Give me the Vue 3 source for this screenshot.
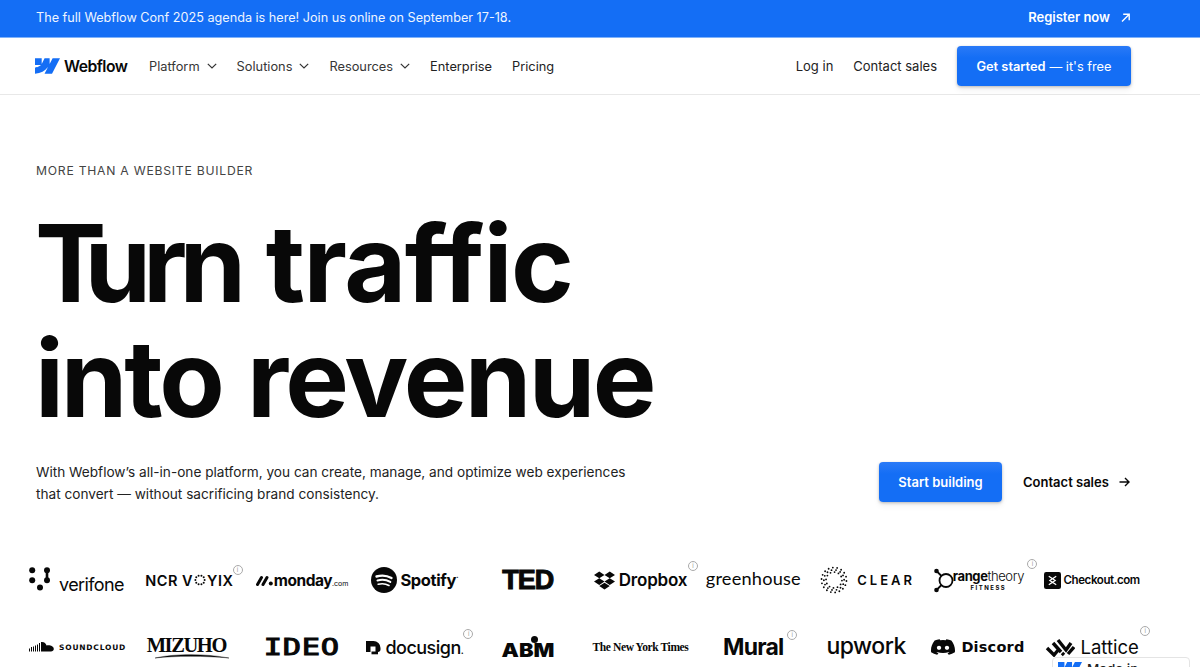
<script setup>
const wf = 'M1080 0L735.4 673.7H411.7L555.9 394.3H549.4C430.5 548.9 253.1 650.6 0 673.7V400.1C0 400.1 161.9 390.5 257.1 290.5H0V0H288.9V237.9H295.4L413.5 0H631.9V236.4H638.4L760.9 0H1080Z'
const navItems = [
  { label: 'Platform', menu: true },
  { label: 'Solutions', menu: true },
  { label: 'Resources', menu: true },
  { label: 'Enterprise', menu: false },
  { label: 'Pricing', menu: false }
]
const clearDots = []
for (const [r, n] of [[7.4, 12], [9.4, 14], [11.6, 18]]) {
  for (let i = 0; i < n; i++) {
    const a = (i / n) * Math.PI * 2 + r
    clearDots.push({ x: 13 + r * Math.cos(a), y: 13 + r * Math.sin(a) })
  }
}
const voyix = []
for (let i = 0; i < 10; i++) {
  const a = (i / 10) * Math.PI * 2
  voyix.push({ x: 6 + 4.6 * Math.cos(a), y: 6 + 4.6 * Math.sin(a) })
}
</script>

<template>
  <div class="page">
    <div class="banner">
      <span class="banner-text">The full Webflow Conf 2025 agenda is here! Join us online on September 17-18.</span>
      <span class="banner-link">Register now
        <svg width="11" height="11" viewBox="0 0 11 11" fill="none" stroke="#fff" stroke-width="1.4"><path d="M2 9.5 9 2.5M3.2 2.2H9.2V8.2"/></svg>
      </span>
    </div>

    <nav class="nav">
      <div class="brand">
        <svg width="25" height="16" viewBox="0 0 1080 674"><path :d="wf" fill="#146ef5"/></svg>
        <span class="brand-name">Webflow</span>
      </div>
      <ul class="nav-list">
        <li v-for="item in navItems" :key="item.label" class="nav-item" :class="{ dark: !item.menu }">
          {{ item.label }}
          <svg v-if="item.menu" width="10" height="6" viewBox="0 0 10 6" fill="none" stroke="#333" stroke-width="1.2"><path d="M.8.8 5 5 9.2.8"/></svg>
        </li>
      </ul>
      <div class="nav-right">
        <span class="nav-item dark">Log in</span>
        <span class="nav-item dark">Contact sales</span>
        <span class="btn btn-nav">Get started <span class="light">— it's free</span></span>
      </div>
    </nav>

    <main class="hero">
      <p class="eyebrow">MORE THAN A WEBSITE BUILDER</p>
      <h1 class="title"><span class="w-turn"><span class="w-t">T</span>urn</span> <span class="w-traffic">traffic</span><br><span class="w-into">into</span> <span class="w-revenue">revenue</span></h1>
      <div class="sub">
        <p class="lead">With Webflow’s all-in-one platform, you can create, manage, and optimize web experiences<br>that convert — without sacrificing brand consistency.</p>
        <div class="cta">
          <span class="btn btn-hero">Start building</span>
          <span class="cta-link">Contact sales
            <svg width="11" height="10" viewBox="0 0 11 10" fill="none" stroke="#080808" stroke-width="1.4"><path d="M.5 5H10M6 1l4 4-4 4"/></svg>
          </span>
        </div>
      </div>
    </main>

    <section class="logos">
      <div class="logo verifone">
        <svg width="22" height="24" viewBox="0 0 22 24" class="vf-mark"><g fill="#080808"><circle cx="3.200" cy="3.200" r="3"/><circle cx="3.200" cy="13.200" r="3"/><circle cx="11" cy="20.500" r="3"/><circle cx="18" cy="3.200" r="3"/><circle cx="18" cy="13.200" r="3"/><rect x="16.700" y="3" width="2.600" height="10"/></g></svg>
        <span>verifone</span>
      </div>
      <div class="logo ncr">
        <span>NCR V</span><svg width="12" height="12" viewBox="0 0 12 12"><circle v-for="(d, i) in voyix" :key="i" :cx="d.x" :cy="d.y" r="1" fill="#080808"/></svg><span>YIX</span>
        <i class="info i-ncr">i</i>
      </div>
      <div class="logo monday">
        <svg width="17" height="11" viewBox="0 0 17 11" fill="#080808"><path d="M1.500 9.500 5.500 2.500M7 9.500l4-7" stroke="#080808" stroke-width="3" stroke-linecap="round"/><circle cx="14.800" cy="8.500" r="2"/></svg>
        <span>monday<small>.com</small></span>
      </div>
      <div class="logo spotify">
        <svg width="26" height="26" viewBox="0 0 26 26"><circle cx="13" cy="13" r="13" fill="#080808"/><g fill="none" stroke="#fff" stroke-linecap="round"><path d="M5.500 9.500c5-1.500 10.500-1 15 1.500" stroke-width="2.400"/><path d="M6.500 13.500c4.500-1.200 9-.7 12.800 1.400" stroke-width="2"/><path d="M7.200 17.300c3.800-1 7.500-.6 10.800 1.200" stroke-width="1.600"/></g></svg>
        <span>Spotify<sup>·</sup></span>
      </div>
      <div class="logo ted"><span>TED</span></div>
      <div class="logo dropbox">
        <svg width="21" height="19" viewBox="0 1.500 24 21" fill="#080808"><path d="M6 1.807L0 5.629l6 3.822 6.001-3.822L6 1.807zM18 1.807l-6 3.822 6 3.822 6-3.822-6-3.822zM0 13.274l6 3.822 6.001-3.822L6 9.452l-6 3.822zM18 9.452l-6 3.822 6 3.822 6-3.822-6-3.822zM6 18.371l6.001 3.822 6-3.822-6-3.822L6 18.371z"/></svg>
        <span>Dropbox</span>
        <i class="info i-dropbox">i</i>
      </div>
      <div class="logo greenhouse"><span>greenhouse</span></div>
      <div class="logo clear">
        <svg width="28" height="28" viewBox="0 0 26 26"><circle v-for="(d, i) in clearDots" :key="i" :cx="d.x" :cy="d.y" r=".85" fill="#080808"/></svg>
        <span>CLEAR</span>
      </div>
      <div class="logo orange">
        <svg width="20" height="25" viewBox="0 0 20 25" class="ot-mark" fill="none" stroke="#080808" stroke-width="1.800"><path d="M2.500 3 7.500 8M2.500 22l5-5"/><circle cx="2.500" cy="3" r="2.300" fill="#080808" stroke="none"/><circle cx="2.500" cy="22" r="2.300" fill="#080808" stroke="none"/><circle cx="12" cy="12.500" r="6.500"/></svg>
        <div class="ot-text"><span class="ot-name"><b>range</b>theory</span><span class="ot-sub">FITNESS</span></div>
        <i class="info i-orange">i</i>
      </div>
      <div class="logo checkout">
        <svg width="17" height="17" viewBox="0 0 16 16"><rect width="16" height="16" rx="2" fill="#080808"/><path d="M11.500 4 5.500 8l6 4M4.500 4l6 4-6 4" fill="none" stroke="#fff" stroke-width="1.200"/></svg>
        <span>Checkout.com</span>
      </div>

      <div class="logo soundcloud">
        <svg width="25" height="12" viewBox="0 0 25 11" fill="#080808"><path d="M0 7h1v3H0zM2 5.500h1V10H2zM4 5h1v5H4zM6 4h1v6H6zM8 3h1v7H8zM10 1.500h1V10h-1zM12 .5C15 0 17 1.800 17.500 4 20 3.200 24.800 4 24.800 7.500 24.800 9 23.500 10 22 10H12z"/></svg>
        <span>SOUNDCLOUD</span>
      </div>
      <div class="logo mizuho">
        <span>MIZUHO</span>
        <svg width="74" height="5" viewBox="0 0 74 5" class="mz-swoosh"><path d="M0 4C20-.5 50-.5 74 4 50 1.800 20 1.800 0 4Z" fill="#080808" stroke="#080808" stroke-width=".4"/></svg>
      </div>
      <div class="logo ideo"><span>IDEO</span></div>
      <div class="logo docusign">
        <svg width="15" height="15" viewBox="0 0 15 15" fill="#080808"><path d="M0 1h7.500a7 7 0 0 1 7 7v1.500c0 1.500-1 2.500-2.500 2.500H9.500V6.500H4.500V12H0z"/><path d="M5.500 11.500H12v2.800H5.500z"/></svg>
        <span>docusign<small>.</small></span>
        <i class="info i-docu">i</i>
      </div>
      <div class="logo abm">
        <span>ABM</span>
        <b class="abm-dot"></b>
      </div>
      <div class="logo nyt"><span>The New York Times</span></div>
      <div class="logo mural">
        <span>Mural</span>
        <i class="info i-mural">i</i>
      </div>
      <div class="logo upwork"><span>upwork</span></div>
      <div class="logo discord">
        <svg width="24" height="18" viewBox="0 1.500 24 21" preserveAspectRatio="none" fill="#080808"><path d="M20.317 4.37a19.791 19.791 0 0 0-4.885-1.515.074.074 0 0 0-.079.037c-.21.375-.444.864-.608 1.25a18.27 18.27 0 0 0-5.487 0 12.64 12.64 0 0 0-.617-1.25.077.077 0 0 0-.079-.037A19.736 19.736 0 0 0 3.677 4.37a.07.07 0 0 0-.032.027C.533 9.046-.32 13.58.099 18.057a.082.082 0 0 0 .031.057 19.9 19.9 0 0 0 5.993 3.03.078.078 0 0 0 .084-.028 14.09 14.09 0 0 0 1.226-1.994.076.076 0 0 0-.041-.106 13.107 13.107 0 0 1-1.872-.892.077.077 0 0 1-.008-.128 10.2 10.2 0 0 0 .372-.292.074.074 0 0 1 .077-.01c3.928 1.793 8.18 1.793 12.062 0a.074.074 0 0 1 .078.01c.12.098.246.198.373.292a.077.077 0 0 1-.006.127 12.299 12.299 0 0 1-1.873.892.077.077 0 0 0-.041.107c.36.698.772 1.362 1.225 1.993a.076.076 0 0 0 .084.028 19.839 19.839 0 0 0 6.002-3.03.077.077 0 0 0 .032-.054c.5-5.177-.838-9.674-3.549-13.66a.061.061 0 0 0-.031-.03zM8.02 15.33c-1.183 0-2.157-1.085-2.157-2.419 0-1.333.956-2.419 2.157-2.419 1.21 0 2.176 1.096 2.157 2.42 0 1.333-.956 2.418-2.157 2.418zm7.975 0c-1.183 0-2.157-1.085-2.157-2.419 0-1.333.955-2.419 2.157-2.419 1.21 0 2.176 1.096 2.157 2.42 0 1.333-.946 2.418-2.157 2.418z"/></svg>
        <span>Discord</span>
      </div>
      <div class="logo lattice">
        <svg width="30" height="19" viewBox="0 0 30 19" fill="none" stroke="#080808" stroke-width="3.400"><path d="M2 10l7 7 5-6M8 5l8 9M13 2l8 10 5-7M19 17l-2-2M23 16l6-7"/></svg>
        <span>Lattice</span>
        <i class="info i-lattice">i</i>
      </div>
    </section>

    <div class="badge">
      <svg width="24" height="15" viewBox="0 0 1080 674"><path :d="wf" fill="#146ef5"/></svg>
      <span>Made in Webflow</span>
    </div>
  </div>
</template>

<style>
html, body { margin: 0; height: 667px; overflow: hidden; background: #fff; }
</style>

<style scoped>
.page {
  position: relative;
  width: 1200px;
  height: 667px;
  overflow: hidden;
  background: #fff;
  color: #080808;
  font-family: Inter, "Noto Sans", sans-serif;
}
svg { flex-shrink: 0; }
.banner {
  border-bottom: 1px solid #7fb2fa;
  background: #146ef5;
  color: #fff;
  display: flex;
  align-items: center;
  justify-content: space-between;
  padding: 0 69px 3px 36px;
  box-sizing: content-box;
  height: 34px;
  font-size: 12.650px;
}
.banner-text { color: #eef5ff; }
.banner-link {
  display: flex;
  align-items: center;
  gap: 10px;
  font-weight: 600;
  font-size: 13px;
}
.nav {
  height: 56px;
  border-bottom: 1px solid #e8e8e8;
  display: flex;
  align-items: center;
  padding: 0 69px 0 35px;
}
.brand { display: flex; align-items: center; gap: 4px; width: 114px; }
.brand-name { font-size: 15.700px; font-weight: 600; letter-spacing: -.5px; }
.nav-list { display: flex; gap: 20px; margin: 0; padding: 0; list-style: none; }
.nav-item {
  display: flex;
  align-items: center;
  gap: 7px;
  font-size: 12.800px;
  color: #363636;
}
.nav-item.dark { color: #222; }
.nav-right { margin-left: auto; display: flex; align-items: center; gap: 20px; }
.nav-right .nav-item { font-size: 13px; }
.btn {
  display: flex;
  align-items: center;
  justify-content: center;
  background: linear-gradient(#2a7af7, #146ef5 30%);
  color: #fff;
  border-radius: 4px;
  font-size: 12.800px;
  font-weight: 600;
  box-shadow: 0 1px 3px rgba(0, 0, 0, .25), 0 4px 6px rgba(0, 0, 0, .06);
}
.btn-nav { width: 174px; height: 40px; gap: .3em; }
.light { font-weight: 400; }
.btn-hero { width: 123px; height: 40px; font-size: 13px; }
.hero { padding: 0 69px 0 36px; }
.eyebrow {
  margin: 0;
  padding-top: 68px;
  font-size: 12.200px;
  line-height: 16px;
  letter-spacing: .75px;
  color: #444;
}
.title {
  margin: 27px 0 0 -1px;
  font-size: 107px;
  line-height: 114.500px;
  font-weight: 700;
  color: #080808;
}
.w-turn { letter-spacing: -8px; }
.w-t { letter-spacing: -22px; }
.w-traffic { letter-spacing: -1.500px; margin-left: 2.500px; }
.w-into { letter-spacing: -3.200px; }
.w-revenue { letter-spacing: -2.700px; }
.sub {
  display: flex;
  align-items: center;
  justify-content: space-between;
  margin-top: 24px;
}
.lead { margin: 2px 0 0; font-size: 13.630px; line-height: 22px; color: #222; }
.cta { display: flex; align-items: center; gap: 21px; }
.cta-link {
  display: flex;
  align-items: center;
  gap: 10px;
  font-size: 13px;
  font-weight: 600;
  width: 108px;
}
.logos {
  display: grid;
  grid-template-columns: repeat(10, 95px);
  grid-auto-rows: 40px;
  column-gap: 17.800px;
  row-gap: 27px;
  padding-left: 29px;
  margin-top: 55px;
}
.logo {
  position: relative;
  display: flex;
  align-items: center;
  justify-content: center;
  white-space: nowrap;
  color: #080808;
}
.info {
  position: absolute;
  width: 8px;
  height: 8px;
  border: 1px solid #aaa;
  border-radius: 50%;
  font: normal 6px/8px Inter, sans-serif;
  text-align: center;
  color: #999;
}
.verifone { justify-content: flex-start; gap: 8px; }
.vf-mark { margin-top: -2px; }
.verifone span { font-size: 18px; letter-spacing: -.6px; transform: translateY(4px); }
.ncr { font-size: 14.500px; font-weight: 600; letter-spacing: .5px; }
.ncr svg { margin: 0 1px; }
.i-ncr { top: 5px; right: -6px; }
.monday { gap: 1px; font-size: 15.500px; font-weight: 700; letter-spacing: -.5px; }
.monday small { font-size: 7px; font-weight: 400; letter-spacing: 0; }
.spotify { gap: 3px; font-size: 16.500px; font-weight: 700; letter-spacing: -.4px; }
.spotify sup { font-size: 8px; line-height: 0; }
.ted span {
  font-family: "Liberation Sans", sans-serif;
  font-size: 27px;
  font-weight: 700;
  letter-spacing: -1px;
  -webkit-text-stroke: 1px #080808;
}
.dropbox { gap: 4px; font-size: 17px; font-weight: 600; letter-spacing: -.2px; }
.i-dropbox { top: 1px; right: -10px; }
.greenhouse { font-family: Lato, sans-serif; font-size: 18.200px; letter-spacing: .2px; padding-bottom: 4px; }
.clear { gap: 9px; font-size: 13px; font-weight: 600; letter-spacing: 3px; }
.clear span { margin-right: -3px; }
.orange { gap: 0; }
.ot-text { display: flex; flex-direction: column; align-items: center; margin-left: -1px; }
.ot-name { font-size: 13px; line-height: 15px; font-weight: 300; letter-spacing: -.4px; }
.ot-name b { font-weight: 700; }
.ot-sub { font-size: 6px; line-height: 7px; font-weight: 700; letter-spacing: 1.500px; }
.i-orange { top: -1px; right: -11px; }
.checkout { gap: 3px; font-size: 11.500px; font-weight: 600; letter-spacing: -.4px; }
.soundcloud { gap: 5px; justify-content: flex-start; font-size: 7.500px; font-weight: 700; letter-spacing: .8px; font-family: "DejaVu Sans", sans-serif; }
.mizuho { flex-direction: column; font-family: "Liberation Serif", serif; font-size: 20.500px; font-weight: 700; line-height: 20px; letter-spacing: -1.400px; }
.mizuho span { transform: translateX(-3px); }
.mz-swoosh { margin-top: -1px; transform: translateX(3px); }
.ideo span { display: block; font-family: "DejaVu Sans Mono", monospace; font-size: 23px; font-weight: 400; letter-spacing: .5px; -webkit-text-stroke: 1px #080808; transform: scaleX(1.320); }
.docusign { gap: 4px; font-size: 18px; font-weight: 500; letter-spacing: -.5px; }
.docusign small { font-size: 10px; }
.i-docu { top: 2px; right: -11px; }
.abm span { display: block; font-size: 19px; font-weight: 900; transform: translateY(3px) scaleX(1.150); }
.abm-dot {
  position: absolute;
  width: 7px;
  height: 7px;
  top: 9px;
  left: 51px;
  border-radius: 50%;
  background: #080808;
}
.nyt { font-family: "Liberation Serif", serif; font-size: 11.500px; font-weight: 700; letter-spacing: -.4px; }
.mural { font-size: 23px; font-weight: 700; letter-spacing: -.8px; }
.i-mural { top: 3px; right: 4px; }
.upwork { font-size: 23px; font-weight: 500; letter-spacing: -.5px; padding-bottom: 3px; }
.discord { gap: 6px; justify-content: flex-start; }
.discord span { font-family: "DejaVu Sans", sans-serif; font-size: 14.500px; font-weight: 700; letter-spacing: .2px; }
.lattice { gap: 6px; font-size: 18.500px; }
.i-lattice { top: -1px; right: -11px; }
.badge {
  position: absolute;
  left: 1052px;
  top: 657px;
  width: 138px;
  height: 30px;
  box-sizing: border-box;
  padding: 4px 0 0 5px;
  display: flex;
  gap: 5px;
  background: #fff;
  border: 1px solid #e4e4e4;
  border-radius: 4px;
  font-size: 13.500px;
  line-height: 15px;
  font-weight: 500;
  color: #222;
}
</style>
